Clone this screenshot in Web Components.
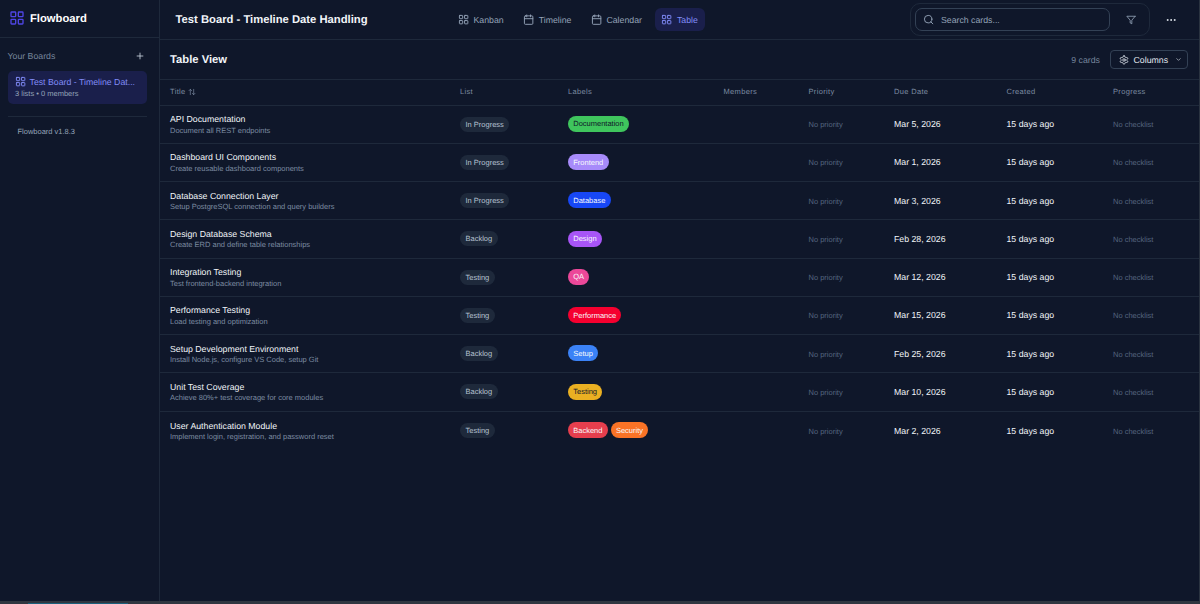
<!DOCTYPE html>
<html><head><meta charset="utf-8">
<style>
html,body{margin:0;height:100%;background:#0f172a;font-family:"Liberation Sans",Arial,sans-serif;overflow:hidden;text-rendering:geometricPrecision}
</style></head><body>
<fb-app></fb-app>
<script>
const ICONS={
grid:'<rect x="3" y="3" width="7" height="7" rx="1"/><rect x="14" y="3" width="7" height="7" rx="1"/><rect x="14" y="14" width="7" height="7" rx="1"/><rect x="3" y="14" width="7" height="7" rx="1"/>',
cal:'<path d="M8 2v4"/><path d="M16 2v4"/><rect x="3" y="4" width="18" height="18" rx="2"/><path d="M3 10h18"/>',
search:'<circle cx="11" cy="11" r="8"/><path d="m21 21-4.3-4.3"/>',
filter:'<polygon points="22 3 2 3 10 12.46 10 19 14 21 14 12.46 22 3"/>',
dots:'<circle cx="12" cy="12" r="1"/><circle cx="19" cy="12" r="1"/><circle cx="5" cy="12" r="1"/>',
plus:'<path d="M5 12h14"/><path d="M12 5v14"/>',
chev:'<path d="m6 9 6 6 6-6"/>',
sort:'<path d="m21 16-4 4-4-4"/><path d="M17 20V4"/><path d="m3 8 4-4 4 4"/><path d="M7 4v16"/>',
gear:'<path d="M12.22 2h-.44a2 2 0 0 0-2 2v.18a2 2 0 0 1-1 1.73l-.43.25a2 2 0 0 1-2 0l-.15-.08a2 2 0 0 0-2.73.73l-.22.38a2 2 0 0 0 .73 2.73l.15.1a2 2 0 0 1 1 1.72v.51a2 2 0 0 1-1 1.74l-.15.09a2 2 0 0 0-.73 2.73l.22.38a2 2 0 0 0 2.73.73l.15-.08a2 2 0 0 1 2 0l.43.25a2 2 0 0 1 1 1.73V20a2 2 0 0 0 2 2h.44a2 2 0 0 0 2-2v-.18a2 2 0 0 1 1-1.73l.43-.25a2 2 0 0 1 2 0l.15.08a2 2 0 0 0 2.73-.73l.22-.39a2 2 0 0 0-.73-2.73l-.15-.08a2 2 0 0 1-1-1.74v-.5a2 2 0 0 1 1-1.74l.15-.09a2 2 0 0 0 .73-2.73l-.22-.38a2 2 0 0 0-2.73-.73l-.15.08a2 2 0 0 1-2 0l-.43-.25a2 2 0 0 1-1-1.73V4a2 2 0 0 0-2-2z"/><circle cx="12" cy="12" r="3"/>'
};
const icon=(n,s,w=2)=>`<svg width="${s}" height="${s}" viewBox="0 0 24 24" fill="none" stroke="currentColor" stroke-width="${w}" stroke-linecap="round" stroke-linejoin="round" style="display:block;flex:none">${ICONS[n]}</svg>`;
class Base extends HTMLElement{
  render(css,html){ if(!this.shadowRoot) this.attachShadow({mode:'open'}); this.shadowRoot.innerHTML=`<style>${css}</style>${html}`; }
}
class FbIcon extends Base{connectedCallback(){this.render(':host{display:block;flex:none}',icon(this.getAttribute('name'),+this.getAttribute('size')||16,+this.getAttribute('sw')||2));}}
customElements.define('fb-icon',FbIcon);

class FbSidebar extends Base{connectedCallback(){this.render(`
:host{display:flex;flex-direction:column;width:159px;flex:none;border-right:1px solid #1e293b;box-sizing:content-box}
.brand{height:37.5px;box-sizing:border-box;padding-top:1px;display:flex;align-items:center;gap:5.3px;padding-left:8.7px;border-bottom:1px solid #1e293b;color:#fff;font-weight:700;font-size:11.25px}
.brand fb-icon{color:#4f46e5;margin-top:-1px}
.head{display:flex;justify-content:space-between;align-items:center;height:18px;margin-top:9.5px;padding:0 14.5px 0 7.5px;font-size:8.75px;color:#76859b}
.head fb-icon{color:#cbd5e1}
.board{margin:6px 12.5px 0 7.5px;height:32.5px;border-radius:5px;background:#1a1f4b;padding:0 7.5px;display:flex;flex-direction:column;justify-content:center;box-sizing:border-box}
.t{display:flex;gap:3.25px;align-items:center;color:#818cf8;font-size:8.75px;white-space:nowrap;line-height:12px}
.s{color:#94a3b8;font-size:7.5px;margin-top:1px;line-height:10px}
.sep{height:1px;background:#1e293b;margin:12.5px 12.5px 0 7.5px}
.v{margin:9px 0 0 17.5px;line-height:12px;color:#94a3b8;font-size:7.5px}
`,`<div class="brand"><fb-icon name="grid" size="16"></fb-icon>Flowboard</div>
<div class="head">Your Boards<fb-icon name="plus" size="10"></fb-icon></div>
<div class="board"><div class="t"><fb-icon name="grid" size="11.25"></fb-icon><span>Test Board - Timeline Dat...</span></div><div class="s">3 lists • 0 members</div></div>
<div class="sep"></div><div class="v">Flowboard v1.8.3</div>`);}}
customElements.define('fb-sidebar',FbSidebar);

class FbTab extends Base{connectedCallback(){const a=this.hasAttribute('active');this.render(`
:host{display:flex;align-items:center;gap:4.25px;height:23px;padding:0 7.5px 0 6.5px;border-radius:6px;font-size:8.75px;color:${a?'#818cf8':'#94a3b8'};${a?'background:#1a1f4b;':''}}
`,`<fb-icon name="${this.getAttribute('icon')}" size="11.25"></fb-icon><slot></slot>`);}}
customElements.define('fb-tab',FbTab);

class FbTopbar extends Base{connectedCallback(){this.render(`
:host{display:flex;align-items:center;height:39px;border-bottom:1px solid #1e293b;flex:none}
.title{width:276px;padding-left:15.5px;font-size:11.25px;font-weight:700;color:#f1f5f9;white-space:nowrap;box-sizing:content-box}
.tabs{display:flex;gap:5.5px}
.right{margin-left:auto;display:flex;align-items:center;margin-right:22.5px}
.box{display:flex;align-items:center;width:240px;height:33px;border:1px solid #1e293b;border-radius:10px;padding:0 4px;box-sizing:border-box;gap:16px;margin-right:14.5px}
.search{width:195px;height:23px;border:1px solid #334155;border-radius:7px;display:flex;align-items:center;gap:7px;padding:0 6.7px;box-sizing:border-box;font-size:8.75px;color:#94a3b8;flex:none}
.f{color:#94a3b8}.d{color:#e2e8f0}
`,`<div class="title">Test Board - Timeline Date Handling</div>
<div class="tabs"><fb-tab icon="grid">Kanban</fb-tab><fb-tab icon="cal">Timeline</fb-tab><fb-tab icon="cal">Calendar</fb-tab><fb-tab icon="grid" active>Table</fb-tab></div>
<div class="right"><div class="box"><div class="search"><fb-icon name="search" size="11.25"></fb-icon>Search cards...</div><fb-icon class="f" name="filter" size="10"></fb-icon></div><fb-icon class="d" name="dots" size="12"></fb-icon></div>`);}}
customElements.define('fb-topbar',FbTopbar);

class FbPill extends Base{connectedCallback(){const bg=this.getAttribute('bg'),c=this.getAttribute('fg');this.render(`
:host{display:inline-flex;align-items:center;height:16px;padding:0 5.25px;border-radius:8px;font-size:7.5px;background:${bg};color:${c};white-space:nowrap;margin-top:-.5px}
`,`<slot></slot>`);}}
customElements.define('fb-pill',FbPill);

const COLS='290px 108px 155.5px 85px 85.5px 112.5px 106.5px 1fr';
class FbHead extends Base{connectedCallback(){this.render(`
:host{display:grid;grid-template-columns:${COLS};height:25.5px;box-sizing:border-box;align-items:center;border-bottom:1px solid #1e293b;padding:0 0 1.5px 10px;font-size:7.5px;color:#7c8ba1;letter-spacing:.33px}
.t{display:flex;align-items:center;gap:2px}
`,`<div class="t">Title <fb-icon name="sort" size="8"></fb-icon></div><div>List</div><div>Labels</div><div>Members</div><div>Priority</div><div>Due Date</div><div>Created</div><div>Progress</div>`);}}
customElements.define('fb-head',FbHead);

class FbRow extends Base{connectedCallback(){const g=n=>this.getAttribute(n);
const labels=JSON.parse(g('labels')).map(([t,b,f])=>`<fb-pill bg="${b}" fg="${f}">${t}</fb-pill>`).join('');
this.render(`
:host{display:grid;grid-template-columns:${COLS};height:38.25px;box-sizing:border-box;align-items:center;border-bottom:1px solid #1e293b;padding-left:10px}
.tx{padding-top:2px}
.n{font-size:8.75px;line-height:11.5px;color:#f1f5f9;white-space:nowrap}
.sub{font-size:7.5px;line-height:10.5px;color:#7c8ba1;white-space:nowrap}
.cell{display:flex;align-items:center}
.list{display:inline-flex;height:15px;align-items:center;padding:0 5.5px;border-radius:8px;background:#1e293b;color:#b6c2d2;font-size:7.5px}
.ls{display:flex;gap:3px}
.m{font-size:7.5px;color:#55657f;padding-top:1px}
.d{font-size:8.75px;color:#f1f5f9}
`,`<div class="tx"><div class="n">${g('name')}</div><div class="sub">${g('sub')}</div></div>
<div class="cell"><span class="list">${g('list')}</span></div><div class="ls">${labels}</div><div></div>
<div class="m">No priority</div><div class="d">${g('due')}</div><div class="d">15 days ago</div><div class="m">No checklist</div>`);}}
customElements.define('fb-row',FbRow);

const DATA=[
['API Documentation','Document all REST endpoints','In Progress',[['Documentation','#3fc55d','#0f172a']],'Mar 5, 2026'],
['Dashboard UI Components','Create reusable dashboard components','In Progress',[['Frontend','#a78bfa','#f8fafc']],'Mar 1, 2026'],
['Database Connection Layer','Setup PostgreSQL connection and query builders','In Progress',[['Database','#1747f5','#f8fafc']],'Mar 3, 2026'],
['Design Database Schema','Create ERD and define table relationships','Backlog',[['Design','#a855f7','#f8fafc']],'Feb 28, 2026'],
['Integration Testing','Test frontend-backend integration','Testing',[['QA','#ec4899','#f8fafc']],'Mar 12, 2026'],
['Performance Testing','Load testing and optimization','Testing',[['Performance','#f5002f','#f8fafc']],'Mar 15, 2026'],
['Setup Development Environment','Install Node.js, configure VS Code, setup Git','Backlog',[['Setup','#3b82f6','#f8fafc']],'Feb 25, 2026'],
['Unit Test Coverage','Achieve 80%+ test coverage for core modules','Backlog',[['Testing','#eab022','#0f172a']],'Mar 10, 2026'],
['User Authentication Module','Implement login, registration, and password reset','Testing',[['Backend','#e53e4d','#f8fafc'],['Security','#f97326','#f8fafc']],'Mar 2, 2026']
];
class FbTable extends Base{connectedCallback(){this.render(`
:host{display:block;flex:1}
.bar{display:flex;align-items:center;height:40px;box-sizing:border-box;border-bottom:1px solid #1e293b;padding:0 11px 0 10px}
h2{margin:0;font-size:11.25px;font-weight:700;color:#f1f5f9}
.c{margin-left:auto;font-size:8.75px;color:#76859b;margin-right:10px}
.btn{display:flex;align-items:center;gap:5px;height:19px;width:78px;box-sizing:border-box;border:1px solid #334155;border-radius:4px;padding:0 7.5px;color:#e2e8f0;font-size:8.75px}
.btn .ch{margin-left:2px}
`,`<div class="bar"><h2>Table View</h2><span class="c">9 cards</span><div class="btn"><fb-icon name="gear" size="10"></fb-icon>Columns<fb-icon class="ch" name="chev" size="7"></fb-icon></div></div>
<fb-head></fb-head><div class="rows"></div>`);
const r=this.shadowRoot.querySelector('.rows');
DATA.forEach(([n,s,l,lb,d],i)=>{const e=document.createElement('fb-row');e.setAttribute('name',n);e.setAttribute('sub',s);e.setAttribute('list',l);e.setAttribute('labels',JSON.stringify(lb));e.setAttribute('due',d);if(i==8)e.style.borderBottom='none';r.append(e);});
}}
customElements.define('fb-table',FbTable);

class FbApp extends Base{connectedCallback(){this.render(`
:host{display:flex;height:604px;flex-direction:column}
.main{display:flex;flex:1;min-height:0;border-right:1px solid #2a3340}
.col{flex:1;display:flex;flex-direction:column;min-width:0}
.strip{height:3px;background:#2f3640;flex:none;display:flex;align-items:flex-end}
.strip i{display:block;height:1px;width:100px;margin-left:28px;background:#1a5f7a}
`,`<div class="main"><fb-sidebar></fb-sidebar><div class="col"><fb-topbar></fb-topbar><fb-table></fb-table></div></div><div class="strip"><i></i></div>`);}}
customElements.define('fb-app',FbApp);
</script></body></html>
